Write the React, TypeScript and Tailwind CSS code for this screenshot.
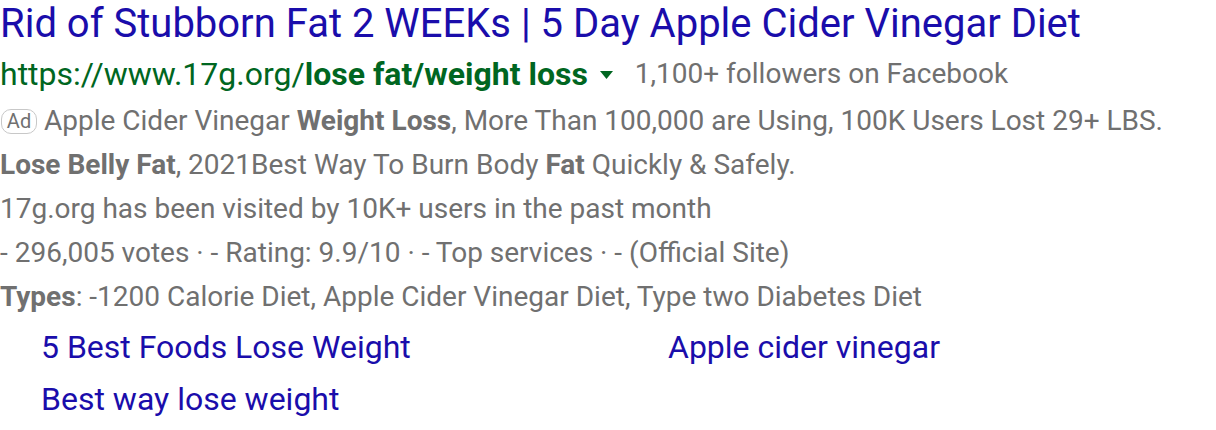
export default function App() {
  return (
    <div className="bg-white w-[1216px] h-[430px] overflow-hidden" style={{ fontFamily: "Roboto, sans-serif" }}>
      <div className="pt-[1px]">
        <h3 className="text-[40px] leading-[46px] text-[#1a0dab] whitespace-nowrap">
          Rid of Stubborn Fat 2 WEEKs | 5 Day Apple Cider Vinegar Diet
        </h3>
        <div className="flex items-center h-[52px] pt-[2px] text-[32px] whitespace-nowrap">
          <span className="text-[#006621]">
            https://www.17g.org/<b className="font-bold">lose fat/weight loss</b>
          </span>
          <svg className="ml-[12px] mr-[22px] mt-[2px]" width="13" height="8" viewBox="0 0 13 8">
            <path d="M0 0h13L6.5 8z" fill="#006621" />
          </svg>
          <span className="text-[#707070] text-[28px]">1,100+ followers on Facebook</span>
        </div>
        <div className="text-[28px] leading-[44px] text-[#707070] whitespace-nowrap">
          <div className="flex items-center">
            <span className="inline-flex items-center justify-center h-[25px] w-[36px] ml-[1px] mr-[7px] rounded-[10px] border border-[#c8c8c8] text-[20px] leading-none">
              Ad
            </span>
            <span>
              Apple Cider Vinegar <b className="font-bold">Weight Loss</b>, More Than 100,000 are Using, 100K Users Lost 29+ LBS.
            </span>
          </div>
          <div>
            <b className="font-bold">Lose Belly Fat</b>, 2021Best Way To Burn Body <b className="font-bold">Fat</b> Quickly &amp; Safely.
          </div>
          <div>17g.org has been visited by 10K+ users in the past month</div>
          <div>- 296,005 votes · - Rating: 9.9/10 · - Top services · - (Official Site)</div>
          <div>
            <b className="font-bold">Types</b>: -1200 Calorie Diet, Apple Cider Vinegar Diet, Type two Diabetes Diet
          </div>
        </div>
        <div className="grid grid-cols-[627px_1fr] pl-[41px] pt-[2px] text-[32px] leading-[52px] text-[#1a0dab]">
          <a>5 Best Foods Lose Weight</a>
          <a>Apple cider vinegar</a>
          <a>Best way lose weight</a>
        </div>
      </div>
    </div>
  );
}
